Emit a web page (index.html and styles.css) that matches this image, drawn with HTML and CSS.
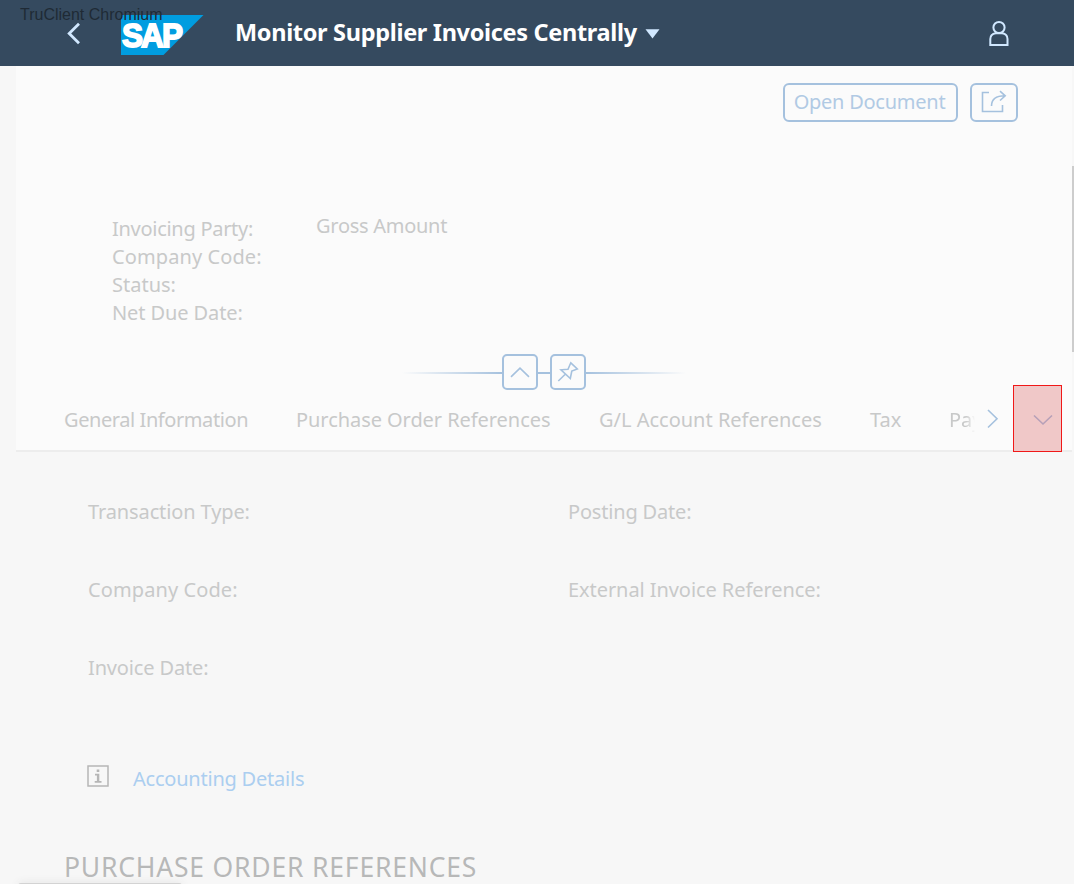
FILE: index.html
```html
<!DOCTYPE html>
<html lang="en">
<head>
<meta charset="utf-8">
<title>Monitor Supplier Invoices Centrally</title>
<link rel="stylesheet" href="styles.css">
</head>
<body>
<div class="app">
  <header class="shell">
    <svg class="back" width="15" height="24" viewBox="0 0 15 24"><path d="M13 1.700 3.200 11.500l9.800 9.800"/></svg>
    <svg class="logo" width="83" height="41" viewBox="0 0 83 41"><path class="logo-bg" d="M0 0H82.500L42.500 40H0Z"/><text x="1" y="32" textLength="59" lengthAdjust="spacingAndGlyphs">SAP</text></svg>
    <h1 class="title">Monitor Supplier Invoices Centrally</h1>
    <svg class="caret" width="15" height="10" viewBox="0 0 15 10"><path d="M.5.300H14.500L7.500 9.500Z"/></svg>
    <svg class="user" width="22" height="28" viewBox="0 0 22 28"><circle cx="11" cy="7.500" r="5.600"/><path d="M7.800 13.200h6.400Q19.500 14 19.500 19v6H2.300v-6Q2.300 14 7.800 13.200Z"/></svg>
    <span class="client-tag">TruClient Chromium</span>
  </header>
  <main class="page">
    <section class="object-header">
      <div class="actions">
        <button class="btn open"><span>Open Document</span></button>
        <button class="btn share"><svg width="26" height="26" viewBox="0 0 26 26"><path d="M8 2.500H1.500V21.500H21.500V15M10.500 16C10.500 9.500 15 5.800 24 5.800M19 1.200 24.200 5.800 19 10.500"/></svg></button>
      </div>
      <div class="facts">
        <div class="fact-list">
          <span class="w-party">Invoicing Party:</span>
          <span class="w-code">Company Code:</span>
          <span class="w-status">Status:</span>
          <span class="w-due">Net Due Date:</span>
        </div>
        <span class="gross">Gross Amount</span>
      </div>
      <div class="divider">
        <i class="line fade-left"></i>
        <button class="btn small"><svg width="22" height="22" viewBox="0 0 22 22"><path d="M2 15.800 11 7.200l9 8.600"/></svg></button>
        <i class="line middle"></i>
        <button class="btn small"><svg width="22" height="22" viewBox="0 0 22 22"><path d="M1.300 20 8.500 13M13.800 1.800 20.300 8 14.800 10 13.300 17.500 4 8.800l7-.5Z"/></svg></button>
        <i class="line fade-right"></i>
      </div>
      <nav class="tabs">
        <span class="tab t1">General Information</span>
        <span class="tab t2">Purchase Order References</span>
        <span class="tab t3">G/L Account References</span>
        <span class="tab t4">Tax</span>
        <span class="tab cut">Pay</span>
        <svg class="next" width="14" height="22" viewBox="0 0 14 22"><path d="M2 2 11 10.700 2 19.500"/></svg>
        <span class="more"><svg width="20" height="12" viewBox="0 0 20 12"><path d="M1 1.500 10 10l9-8.500"/></svg></span>
      </nav>
    </section>
    <section class="details">
      <div class="grid">
        <span class="f-type">Transaction Type:</span><span class="f-post">Posting Date:</span>
        <span class="w-code">Company Code:</span><span class="f-ext">External Invoice Reference:</span>
        <span class="f-date">Invoice Date:</span>
      </div>
      <div class="accounting">
        <svg width="22" height="22" viewBox="0 0 22 22"><rect x="1" y="1" width="20" height="20"/><path class="i-mark" d="M9.700 4.500h2.600v2.500H9.700ZM8 8.700h4.300v7.200h2.200v1.800H7.700v-1.800h2.200v-5.500H8Z"/></svg>
        <a class="link">Accounting Details</a>
      </div>
      <h2 class="heading">PURCHASE ORDER REFERENCES</h2>
    </section>
  </main>
  <i class="scrollbar"></i>
  <i class="status-shadow"></i>
</div>
</body>
</html>
```
FILE: styles.css
```css
* { box-sizing: border-box; }
body { margin: 0; background: #f7f7f7; font-family: "Noto Sans", sans-serif; font-size: 20px; line-height: 28px; color: #c8c9c9; }
.app { position: relative; width: 1074px; height: 884px; overflow: hidden; }
svg { display: block; flex: none; fill: none; stroke: #a5c1de; stroke-width: 1.6; }
span, a, h1, h2 { white-space: nowrap; }
.shell { position: relative; height: 66px; background: #354a5f; display: flex; align-items: flex-start; padding-left: 66px; }
.back { margin-top: 22px; stroke: #d1e8ff; stroke-width: 2.8; }
.logo { margin: 15px 0 0 40px; stroke: none; }
.logo-bg { fill: #009de0; }
.logo text { font: bold 33px "Liberation Sans", sans-serif; fill: #fff; stroke: #fff; stroke-width: 1.8; letter-spacing: -2px; }
.title { margin: 16px 0 0 31px; width: 402px; font-size: 23.500px; line-height: 33px; font-weight: 700; letter-spacing: -0.32px; color: #fff; }
.caret { margin: 29px 0 0 8px; fill: #d1e8ff; stroke: none; }
.user { margin: 20px 64px 0 auto; stroke: #d1e8ff; stroke-width: 2; }
.client-tag { position: absolute; left: 20px; top: 5px; font: 16px/19px "Liberation Sans", sans-serif; color: #1f2a35; }
.page { padding-left: 16px; }
.object-header { height: 386px; background: #fbfbfb; border-bottom: 2px solid #ededed; margin-right: 2px; }
.actions { display: flex; justify-content: flex-end; gap: 12px; padding: 17px 54px 0 0; }
.btn { height: 39px; padding: 0; border: 2px solid #a5c1de; border-radius: 6px; background: #fbfbfb; color: #b1cae4; font: 20px/36px "Noto Sans", sans-serif; display: flex; justify-content: center; align-items: center; flex: none; }
.open { width: 175px; letter-spacing: -0.25px; padding: 0 2px 2px 0; }
.share { width: 48px; }
.facts { display: flex; padding: 93px 0 0 96px; height: 232px; }
.fact-list { display: flex; flex-direction: column; width: 204px; }
.w-party { letter-spacing: -0.28px; }
.w-code { letter-spacing: 0.1px; }
.w-due { letter-spacing: -0.1px; }
.gross { margin-top: -3px; letter-spacing: -0.27px; }
.divider { display: flex; align-items: center; height: 36px; padding-left: 386px; }
.small { width: 36px; height: 36px; border-radius: 5px; }
.line { height: 2px; margin-top: 2px; background: #a5c1de; }
.fade-left { width: 100px; background: linear-gradient(90deg, transparent, #a5c1de); }
.middle { width: 12px; }
.fade-right { width: 100px; background: linear-gradient(90deg, #a5c1de, transparent); }
.tabs { display: flex; height: 60px; padding-left: 48px; }
.tab { padding-top: 16px; }
.t1 { width: 232px; letter-spacing: -0.42px; }
.t2 { width: 303px; letter-spacing: -0.06px; }
.t3 { width: 271px; }
.t4 { width: 79px; }
.cut { width: 26px; overflow: hidden; mask-image: linear-gradient(90deg, #000 65%, transparent); }
.next { margin: 18px 0 0 11px; }
.more { margin: -5px 0 0 13px; width: 49px; height: 67px; position: relative; z-index: 1; background: #f0c8c8; border: 1px solid #f01818; padding: 28px 0 0 19px; }
.more svg { stroke: #b6a0b8; }
.details { padding-left: 48px; }
.grid { display: grid; grid-template-columns: 480px 1fr; grid-auto-rows: 78px; padding: 46px 0 0 24px; }
.f-type { letter-spacing: -0.12px; }
.f-post { letter-spacing: -0.18px; }
.f-ext { letter-spacing: -0.07px; }
.f-date { letter-spacing: -0.15px; }
.accounting { display: flex; align-items: flex-start; gap: 24px; padding-left: 23px; margin-top: 33px; height: 28px; }
.accounting svg { stroke: #b6b6b6; stroke-width: 1.500; }
.accounting .i-mark { fill: #b6b6b6; stroke: none; }
.link { color: #abcef0; letter-spacing: -0.22px; }
.heading { margin: 56px 0 0; font-size: 26.500px; line-height: 36px; font-weight: 400; letter-spacing: 0.800px; color: #b7b8b8; }
.scrollbar { position: absolute; right: 0; top: 166px; width: 2px; height: 186px; background: #cdcdcd; }
.status-shadow { position: absolute; left: 18px; top: 883px; width: 164px; height: 6px; border-radius: 3px; background: #d3d3d3; box-shadow: 0 0 8px #e2e2e2; }
```
